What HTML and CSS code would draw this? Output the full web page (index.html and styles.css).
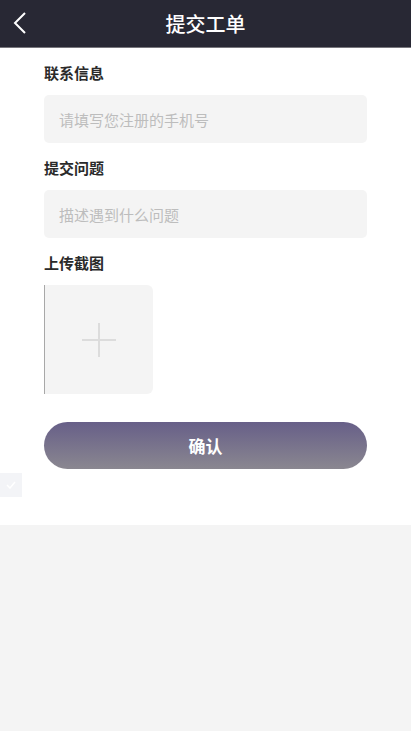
FILE: index.html
```html
<!DOCTYPE html>
<html lang="zh-CN">
<head>
    <meta charset="UTF-8">
    <meta name="viewport" content="width=device-width, initial-scale=1.0">
    <title>提交工单</title>
    <link rel="stylesheet" href="styles.css">
</head>
<body>
    <header class="top-bar">
        <a class="back-button" href="#">
            <svg width="14" height="22" viewBox="0 0 14 22">
                <polyline points="12,1 2,11 12,21" fill="none" stroke="#fff" stroke-width="2"/>
            </svg>
        </a>
        <h1>提交工单</h1>
    </header>

    <div class="page">
        <form class="ticket-form">
            <label class="field-label">联系信息</label>
            <input class="field-input" type="text" placeholder="请填写您注册的手机号">

            <label class="field-label">提交问题</label>
            <input class="field-input" type="text" placeholder="描述遇到什么问题">

            <label class="field-label">上传截图</label>
            <div class="upload-box">
                <span class="plus"></span>
            </div>

            <button class="submit-button" type="button">确认</button>
        </form>

        <div class="float-check">
            <svg width="10" height="8" viewBox="0 0 10 8">
                <polyline points="1,4 4,7 9,1" fill="none" stroke="#fff" stroke-width="1.5"/>
            </svg>
        </div>
    </div>
</body>
</html>
```

FILE: styles.css
```css
* {
    margin: 0;
    padding: 0;
    box-sizing: border-box;
}

body {
    font-family: "Noto Sans CJK SC", "Liberation Sans", sans-serif;
    background: #f4f4f4;
    color: #333;
    min-height: 100vh;
}

.top-bar {
    position: relative;
    height: 48px;
    background: #282834;
    border-bottom: 1px solid #77767c;
    display: flex;
    align-items: center;
    justify-content: center;
}

.top-bar h1 {
    color: #fff;
    font-size: 20px;
    font-weight: 500;
    line-height: 1;
}

.back-button {
    position: absolute;
    left: 13px;
    top: 12px;
    display: flex;
}

.page {
    background: #fff;
    padding: 14px 0 28px;
}

.ticket-form {
    margin: 0 44px;
    display: flex;
    flex-direction: column;
}

.field-label {
    font-size: 15px;
    font-weight: 700;
    line-height: 21px;
    color: #2a2a2a;
    margin-bottom: 12px;
}

.field-input {
    height: 48px;
    border: none;
    outline: none;
    border-radius: 5px;
    background: #f4f4f4;
    padding: 0 15px;
    font-family: inherit;
    font-size: 15px;
    color: #333;
    margin-bottom: 14px;
}

.field-input::placeholder {
    color: #bdbdbd;
}

.upload-box {
    width: 109px;
    height: 109px;
    background: #f4f4f4;
    border-left: 1px solid #a8a8a8;
    border-radius: 0 6px 6px 0;
    display: flex;
    align-items: center;
    justify-content: center;
    margin-bottom: 28px;
}

.plus {
    position: relative;
    width: 34px;
    height: 34px;
}

.plus::before,
.plus::after {
    content: "";
    position: absolute;
    background: #dcdcdc;
}

.plus::before {
    left: 0;
    top: 16px;
    width: 34px;
    height: 2px;
}

.plus::after {
    left: 16px;
    top: 0;
    width: 2px;
    height: 34px;
}

.submit-button {
    height: 47px;
    border: none;
    border-radius: 24px;
    background: linear-gradient(180deg, #675f88 0%, #8a8790 100%);
    color: #fff;
    font-family: inherit;
    font-size: 17px;
    font-weight: 700;
    cursor: pointer;
}

.float-check {
    width: 22px;
    height: 24px;
    margin-top: 4px;
    background: #f3f4f7;
    display: flex;
    align-items: center;
    justify-content: center;
}
```
